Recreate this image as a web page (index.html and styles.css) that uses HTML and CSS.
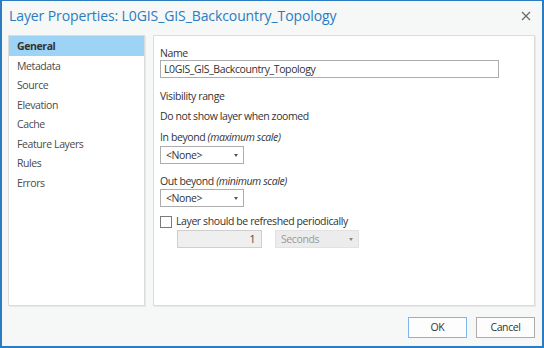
FILE: index.html
```html
<!DOCTYPE html>
<html>
<head>
<meta charset="utf-8">
<link rel="stylesheet" href="styles.css">
</head>
<body>
<div class="window">
  <div class="titlebar">
    <div class="title">Layer Properties: L0GIS_GIS_Backcountry_Topology</div>
    <div class="close"><svg width="10" height="10" viewBox="0 0 10 10"><path d="M1 1L9 9M9 1L1 9" stroke="#6b6b6b" stroke-width="1.3"/></svg></div>
  </div>
  <div class="main">
    <div class="nav">
      <div class="nav-item selected">General</div>
      <div class="nav-item">Metadata</div>
      <div class="nav-item">Source</div>
      <div class="nav-item">Elevation</div>
      <div class="nav-item">Cache</div>
      <div class="nav-item">Feature Layers</div>
      <div class="nav-item">Rules</div>
      <div class="nav-item">Errors</div>
    </div>
    <div class="content">
      <div class="label">Name</div>
      <div class="textbox">L0GIS_GIS_Backcountry_Topology</div>
      <div class="label section">Visibility range</div>
      <div class="label line">Do not show layer when zoomed</div>
      <div class="label line in">In beyond <i>(maximum scale)</i></div>
      <div class="combo first"><span>&lt;None&gt;</span><span class="arrow"></span></div>
      <div class="label line2">Out beyond <i>(minimum scale)</i></div>
      <div class="combo second"><span>&lt;None&gt;</span><span class="arrow"></span></div>
      <div class="check-row"><span class="checkbox"></span><span>Layer should be refreshed periodically</span></div>
      <div class="refresh-row">
        <div class="num">1</div>
        <div class="combo disabled"><span>Seconds</span><span class="arrow"></span></div>
      </div>
    </div>
  </div>
  <div class="footer">
    <div class="btn ok">OK</div>
    <div class="btn">Cancel</div>
  </div>
</div>
</body>
</html>
```
FILE: styles.css
```css
* { box-sizing: border-box; }
html, body { margin: 0; padding: 0; }
body {
  width: 544px; height: 348px; overflow: hidden;
  font-family: "Open Sans", "Noto Sans", sans-serif;
  font-size: 10.5px; letter-spacing: -0.4px; color: #333;
}
.window {
  width: 544px; height: 348px;
  border: 1px solid #2b7cc0;
  border-width: 1px 2px 2px 2px;
  background: #f6f7f7;
  display: flex; flex-direction: column;
}
.titlebar {
  height: 34px; display: flex; align-items: center; justify-content: space-between;
  padding: 0 11px 5px 7px;
}
.title { font-size: 14px; letter-spacing: -0.1px; color: #2a7cc1; }
.close { display: flex; align-items: center; }
.main { display: flex; padding: 0 7px 0 6px; gap: 8px; height: 271px; }
.nav {
  width: 137px; background: #fff; border: 1px solid #dcdcdc;
  box-shadow: 1px 1px 0 #e8e8e8;
}
.nav-item { height: 19.5px; line-height: 20px; padding-left: 8px; color: #4a4a4a; }
.nav-item.selected { background: #9dd3f5; font-weight: 700; color: #333; }
.content {
  flex: 1; background: #fff; border: 1px solid #dcdcdc;
  box-shadow: 1px 1px 0 #e8e8e8;
  padding: 9px 6px 0 6px;
}
.label { line-height: 16px; color: #333; }
.textbox {
  width: 339px; height: 18px; border: 1px solid #adadad; margin-top: -1px;
  padding-left: 3px; line-height: 16px;
}
.section { margin-top: 10px; }
.line { margin-top: 4px; }
.line.in { margin-top: 5px; }
.line2 { margin-top: 9px; }
.combo {
  width: 84px; height: 18px; border: 1px solid #adadad; margin-top: 1px;
  display: flex; justify-content: space-between; align-items: center;
  padding: 0 5px 0 5px; background: #fff;
}
.combo.second { margin-top: 0; }
.arrow { width: 0; height: 0; border-left: 2.5px solid transparent; border-right: 2.5px solid transparent; border-top: 3px solid #555; }
.check-row { display: flex; align-items: center; gap: 4px; margin-top: 7px; line-height: 15px; }
.checkbox { width: 12px; height: 12px; border: 1px solid #7a7a7a; background: #fff; }
.refresh-row { display: flex; gap: 13px; margin-left: 17px; margin-top: 1px; }
.num {
  width: 85px; height: 18px; border: 1px solid #cfcfcf; background: #efefef;
  text-align: right; padding-right: 6px; line-height: 16px; color: #444;
}
.combo.disabled { width: 84px; margin-top: 0; border-color: #e2e2e2; background: #ececec; color: #999; }
.combo.disabled .arrow { border-top-color: #888; }
.footer { flex: 1; display: flex; justify-content: flex-end; align-items: center; gap: 9px; padding-right: 7px; padding-top: 2px; }
.btn {
  width: 59px; height: 21px; border: 1px solid #adadad; background: #fdfdfd;
  display: flex; align-items: center; justify-content: center; color: #333;
}
.btn.ok { border-color: #7bb7ee; }
```
